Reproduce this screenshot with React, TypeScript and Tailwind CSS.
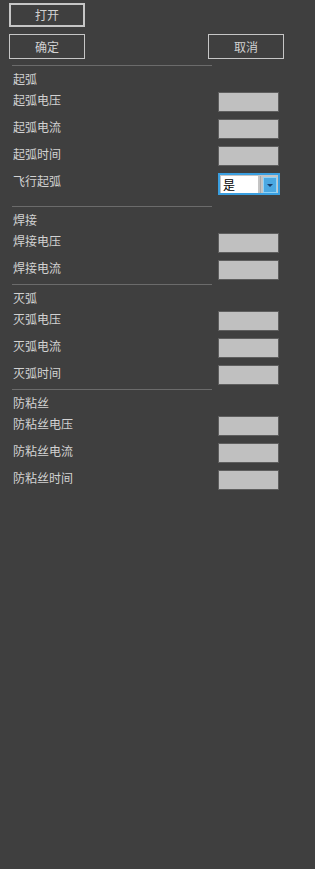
import React from "react";

const font = { fontFamily: '"Noto Sans CJK SC", "Noto Sans", sans-serif' };

function Line() {
  return <div className="ml-[12px] h-px w-[200px] bg-[#6b6b6b]" />;
}

function Title({ text }: { text: string }) {
  return (
    <div className="h-[26px] pl-[13px] pt-[5px] text-[12px] leading-[16px] text-[#d2d2d2]">
      {text}
    </div>
  );
}

function Row({ label, children }: { label: string; children?: React.ReactNode }) {
  return (
    <div className="flex h-[20px] items-start">
      <div className="w-[218px] pl-[13px] text-[12px] leading-[16px] text-[#d2d2d2]">{label}</div>
      {children ?? <div className="h-[20px] w-[61px] border border-[#5e5e5e] bg-[#c0c0c0]" />}
    </div>
  );
}

function Select() {
  return (
    <div className="flex h-[22px] w-[62px] shrink-0 border-2 border-[#3a9fe0] bg-[#c4c4c4] p-px">
      <div className="h-[17px] w-[37px] bg-white pl-[2px] text-[12px] leading-[17px] text-black">是</div>
      <div className="ml-[2px] h-[17px] w-px bg-[#a8a8a8]" />
      <div className="ml-[2px] mt-px flex h-[16px] w-[14px] items-center justify-center border border-[#8fd2f7] bg-[#4aa8e2]">
        <div className="h-0 w-0 border-x-[3px] border-t-[3px] border-x-transparent border-t-[#173d6b]" />
      </div>
    </div>
  );
}

export default function App() {
  return (
    <div className="min-h-[869px] w-full bg-[#3f3f3f] pt-[3px]" style={font}>
      <button className="ml-[9px] flex h-[24px] w-[76px] items-center justify-center border-2 border-[#c6c6c6] text-[12px] leading-[16px] text-[#d2d2d2]">
        打开
      </button>
      <div className="mt-[7px] flex">
        <button className="ml-[9px] flex h-[25px] w-[76px] items-center justify-center border border-[#c6c6c6] text-[12px] leading-[16px] text-[#d2d2d2]">
          确定
        </button>
        <button className="ml-[123px] flex h-[25px] w-[76px] items-center justify-center border border-[#c6c6c6] text-[12px] leading-[16px] text-[#d2d2d2]">
          取消
        </button>
      </div>
      <div className="mt-[6px]">
        <Line />
        <Title text="起弧" />
        <div className="flex flex-col gap-[7px]">
          <Row label="起弧电压" />
          <Row label="起弧电流" />
          <Row label="起弧时间" />
          <Row label="飞行起弧">
            <Select />
          </Row>
        </div>
      </div>
      <div className="mt-[13px]">
        <Line />
        <Title text="焊接" />
        <div className="flex flex-col gap-[7px]">
          <Row label="焊接电压" />
          <Row label="焊接电流" />
        </div>
      </div>
      <div className="mt-[4px]">
        <Line />
        <Title text="灭弧" />
        <div className="flex flex-col gap-[7px]">
          <Row label="灭弧电压" />
          <Row label="灭弧电流" />
          <Row label="灭弧时间" />
        </div>
      </div>
      <div className="mt-[4px]">
        <Line />
        <Title text="防粘丝" />
        <div className="flex flex-col gap-[7px]">
          <Row label="防粘丝电压" />
          <Row label="防粘丝电流" />
          <Row label="防粘丝时间" />
        </div>
      </div>
    </div>
  );
}
